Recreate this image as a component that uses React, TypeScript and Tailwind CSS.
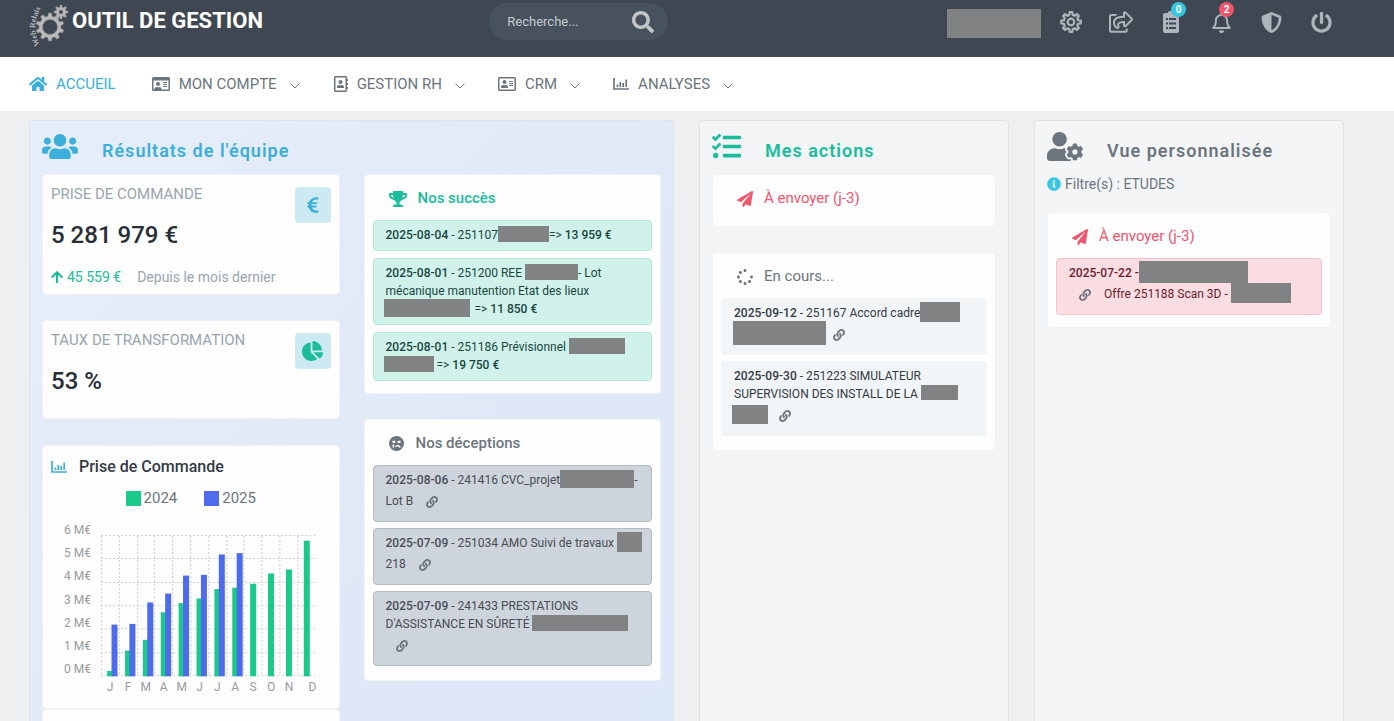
import type { ReactNode } from "react";
import {
  FaArrowUp,
  FaChartPie,
  FaEuroSign,
  FaHome,
  FaInfoCircle,
  FaLink,
  FaPaperPlane,
  FaPowerOff,
  FaRegAddressBook,
  FaRegAddressCard,
  FaRegBell,
  FaRegIdCard,
  FaRegShareSquare,
  FaSearch,
  FaShieldAlt,
  FaSpinner,
  FaTasks,
  FaTrophy,
  FaUserCog,
  FaUsers,
} from "react-icons/fa";

const MONTHS = ["J", "F", "M", "A", "M", "J", "J", "A", "S", "O", "N", "D"];
const ORDERS_2024 = [0.23, 1.1, 1.56, 2.74, 3.13, 3.33, 3.73, 3.79, 3.96, 4.4, 4.57, 5.8];
const ORDERS_2025 = [2.21, 2.24, 3.16, 3.54, 4.31, 4.34, 5.21, 5.27];

function gearPath(cx: number, cy: number, teeth: number, outer: number, inner: number) {
  const points: string[] = [];
  const step = (Math.PI * 2) / teeth;
  for (let i = 0; i < teeth; i++) {
    const a = i * step - Math.PI / 2;
    const corners = [
      [inner, -0.3],
      [outer, -0.17],
      [outer, 0.17],
      [inner, 0.3],
    ];
    corners.forEach(([r, t]) => {
      points.push(`${(cx + r * Math.cos(a + t * step)).toFixed(2)} ${(cy + r * Math.sin(a + t * step)).toFixed(2)}`);
    });
  }
  return `M${points.join("L")}Z`;
}

function ring(cx: number, cy: number, r: number) {
  return `M${cx - r} ${cy}a${r} ${r} 0 1 0 ${r * 2} 0a${r} ${r} 0 1 0 ${-r * 2} 0Z`;
}

function Logo() {
  return (
    <svg className="w-[44px] h-[50px] shrink-0" viewBox="0 0 44 50" aria-hidden="true">
      <path fillRule="evenodd" fill="#b9b9b9" stroke="#8b8b8b" strokeWidth="0.5" d={gearPath(22, 27, 10, 14, 11) + ring(22, 27, 7.5)} />
      <path fillRule="evenodd" fill="#b9b9b9" stroke="#8b8b8b" strokeWidth="0.5" d={gearPath(33, 12, 8, 7, 5) + ring(33, 12, 2)} />
      <path id="logo-arc" fill="none" d="M12 45 Q2 27 13 8" />
      <text fill="#b4b8bc" fontSize="8" fontWeight="700" fontFamily="Liberation Serif, serif">
        <textPath href="#logo-arc">Web Relais</textPath>
      </text>
    </svg>
  );
}

function GearIcon({ className }: { className?: string }) {
  return (
    <svg className={className} viewBox="0 0 24 24" fill="none" stroke="currentColor" strokeWidth="2.4" strokeLinejoin="round">
      <path d={gearPath(12, 12, 8, 10.8, 8)} />
      <circle cx="12" cy="12" r="3.6" />
    </svg>
  );
}

function ListIcon({ className }: { className?: string }) {
  return (
    <svg className={className} viewBox="0 0 18 22">
      <path
        fill="currentColor"
        fillRule="evenodd"
        d="M3 2h3a3 2.500 0 0 1 6 0h3a2 2 0 0 1 2 2v16a2 2 0 0 1-2 2H3a2 2 0 0 1-2-2V4a2 2 0 0 1 2-2ZM4 7v2h2V7ZM7 7v2h7V7ZM4 11.500v2h2v-2ZM7 11.500v2h7v-2ZM4 16v2h2v-2ZM7 16v2h7v-2Z"
      />
    </svg>
  );
}

function BarsIcon({ className }: { className?: string }) {
  return (
    <svg className={className} viewBox="0 0 16 14" fill="none" stroke="currentColor" strokeWidth="1.7">
      <path d="M1 1V12H16M4.500 7.500V10M7.300 5V10M10.200 6V10M13.200 2.500V10" />
    </svg>
  );
}

function SadIcon({ className }: { className?: string }) {
  return (
    <svg className={className} viewBox="0 0 15 15">
      <circle cx="7.500" cy="7.500" r="7.500" fill="currentColor" />
      <path fill="#fff" d="M3.500 4.800h2.800v2.300H3.500ZM8.700 4.800h2.800v2.300H8.700ZM3.600 8.500h1.600v3H3.600Z" />
      <path fill="none" stroke="#fff" strokeWidth="1.300" strokeLinecap="round" d="M6.800 10.300Q9.500 8.700 11 11.300" />
    </svg>
  );
}

function ChevronDown() {
  return (
    <svg className="w-[10px] h-[6px] ml-[13px] mt-1" viewBox="0 0 10 6" fill="none" stroke="currentColor" strokeWidth="1">
      <polyline points="0.5 0.5 5 5 9.5 0.5" />
    </svg>
  );
}

function HeaderButton({ label, children }: { label: string; children: ReactNode }) {
  return (
    <button type="button" aria-label={label} className="relative w-[50px] h-11 flex items-center justify-center text-[#adb4bb]">
      {children}
    </button>
  );
}

function Redacted({ className }: { className: string }) {
  return <span className={`inline-block align-middle bg-[#808284] -mt-[10px] -mb-[6px] ${className}`} />;
}

function ItemLink({ className = "" }: { className?: string }) {
  return (
    <a href="#" aria-label="Ouvrir le lien" className={`inline-flex h-[26px] items-center align-middle text-[#6c757d] ${className}`}>
      <FaLink className="w-3 h-3" />
    </a>
  );
}

function Panel({ className = "", children }: { className?: string; children: ReactNode }) {
  return <section className={`rounded border border-[#dfe2e6] p-3 ${className}`}>{children}</section>;
}

function PanelTitle({ icon, children }: { icon: ReactNode; children: ReactNode }) {
  return (
    <div className="flex h-[41px] gap-6">
      {icon}
      <h2 className="pt-[5px] text-[18px] leading-[26px] font-semibold tracking-[1px]">{children}</h2>
    </div>
  );
}

function Card({ className = "", children }: { className?: string; children: ReactNode }) {
  return <div className={`rounded border border-[#f0f2f5] bg-[#fefefe] px-2 ${className}`}>{children}</div>;
}

function CardTitle({ className = "", children }: { className?: string; children: ReactNode }) {
  return <h3 className={`flex h-[45px] items-center pl-4 pt-[2px] text-[15px] ${className}`}>{children}</h3>;
}

function Item({ className, children }: { className: string; children: ReactNode }) {
  return (
    <li className={`rounded border pt-[5px] pb-[6px] pl-3 text-[12px] leading-[18px] whitespace-nowrap ${className}`}>
      {children}
    </li>
  );
}

function OrdersChart() {
  const base = 160;
  const unit = 23.33;
  return (
    <svg className="w-full" viewBox="0 0 279 184" role="img" aria-label="Prise de commande par mois, 2024 et 2025">
      <g stroke="#c9ccd0" strokeDasharray="2 2">
        {[0, 1, 2, 3, 4, 5, 6].map((n) => (
          <line key={n} x1="50" x2="264" y1={Math.round(base - n * unit) - 0.5} y2={Math.round(base - n * unit) - 0.5} />
        ))}
        {MONTHS.map((_, i) => (
          <line key={i} x1={Math.round(50 + i * 17.8) + 0.5} x2={Math.round(50 + i * 17.8) + 0.5} y1="20" y2={base} />
        ))}
      </g>
      {ORDERS_2024.map((v, i) => (
        <rect key={i} x={56 + i * 17.85} y={base - v * unit} width="6" height={v * unit} fill="#1bc98a" />
      ))}
      {ORDERS_2025.map((v, i) => (
        <rect key={i} x={60.4 + i * 17.85} y={base - v * unit} width="6" height={v * unit} fill="#4f6bed" />
      ))}
      <g fill="#989ca1" fontSize="12">
        {[0, 1, 2, 3, 4, 5, 6].map((n) => (
          <text key={n} x="40" y={157 - n * 23.2} textAnchor="end">
            {n} M€
          </text>
        ))}
        {MONTHS.map((m, i) => (
          <text key={i} x={i === 11 ? 261 : 59 + i * 17.85} y="175" textAnchor="middle">
            {m}
          </text>
        ))}
      </g>
    </svg>
  );
}

const success = "border-[#b5e8db] bg-[#d1f2eb] text-[#17463d]";
const failure = "border-[#b4b9bf] bg-[#ced4dc] text-[#474d54]";
const pending = "border-[#f1f5f8] bg-[#f1f5f8] text-[#343a40]";
const danger = "border-[#f5c2ca] bg-[#fcdde2] text-[#6b1c2a]";

export default function App() {
  return (
    <div className="h-screen overflow-hidden flex flex-col bg-[#eeeff1] font-[Roboto,sans-serif] text-[#6c757d]">
      <header className="h-[57px] shrink-0 flex items-start bg-[#3f4852] pl-7 pr-12">
        <div className="w-[35%] flex items-start">
          <Logo />
          <h1 className="pt-[7px] text-[22px] leading-7 font-bold text-white">OUTIL DE GESTION</h1>
        </div>
        <form className="mt-[3px] w-[179px] h-[37px] rounded-full bg-[#47525e] flex items-center pl-[18px] pr-[14px]">
          <input
            type="text"
            aria-label="Recherche"
            placeholder="Recherche..."
            className="w-full min-w-0 text-[13px] text-[#c3c9cf] placeholder-[#c3c9cf] outline-none"
          />
          <button type="button" aria-label="Lancer la recherche" className="text-[#c2c6ca]">
            <FaSearch className="w-[22px] h-[22px]" />
          </button>
        </form>
        <div className="ml-auto flex">
          <div className="w-[94px] h-[29px] mt-[9px] mr-[5px] bg-[#808284]" />
          <HeaderButton label="Paramètres">
            <GearIcon className="w-[22px] h-[22px]" />
          </HeaderButton>
          <HeaderButton label="Partager">
            <FaRegShareSquare className="w-6 h-6" />
          </HeaderButton>
          <HeaderButton label="Tâches">
            <ListIcon className="w-[18px] h-[22px]" />
            <span className="absolute top-[2px] left-[25px] w-[15px] h-[15px] rounded-full bg-[#37c6e2] text-[10px] leading-[15px] font-bold text-white">0</span>
          </HeaderButton>
          <HeaderButton label="Notifications">
            <FaRegBell className="w-[21px] h-[21px]" />
            <span className="absolute top-[2px] left-[23px] w-[15px] h-[15px] rounded-full bg-[#f1556c] text-[10px] leading-[15px] font-bold text-white">2</span>
          </HeaderButton>
          <HeaderButton label="Sécurité">
            <FaShieldAlt className="w-[21px] h-[21px]" />
          </HeaderButton>
          <HeaderButton label="Déconnexion">
            <FaPowerOff className="w-[21px] h-[21px]" />
          </HeaderButton>
        </div>
      </header>

      <nav className="h-[54px] shrink-0 flex items-center gap-[33px] bg-white pl-[29px] text-[15px] leading-6">
        <a href="#" className="flex items-center mr-[3px] text-[#3bafda]">
          <FaHome className="w-[18px] h-[18px] mr-[9px]" />
          ACCUEIL
        </a>
        <a href="#" className="flex items-center">
          <FaRegIdCard className="w-[18px] h-[18px] mr-[9px]" />
          MON COMPTE
          <ChevronDown />
        </a>
        <a href="#" className="flex items-center">
          <FaRegAddressBook className="w-4 h-4 mr-2" />
          GESTION RH
          <ChevronDown />
        </a>
        <a href="#" className="flex items-center">
          <FaRegAddressCard className="w-[18px] h-[18px] mr-[9px]" />
          CRM
          <ChevronDown />
        </a>
        <a href="#" className="flex items-center">
          <BarsIcon className="w-4 h-[14px] mr-[9px]" />
          ANALYSES
          <ChevronDown />
        </a>
      </nav>

      <main className="flex-1 min-h-0 grid grid-cols-4 gap-[25px] pt-[9px] pl-[29px] pr-[50px]">
        <Panel className="col-span-2 border-[#d3dbea] bg-linear-to-br from-[#e7eefb] via-[#e1e8f6] to-[#dce8fb]">
          <div className="text-[#3bafda]">
            <PanelTitle icon={<FaUsers className="w-9 h-[29px] -mt-[1px]" />}>Résultats de l'équipe</PanelTitle>
          </div>
          <div className="grid grid-cols-2 gap-6 items-start">
            <div>
              <Card className="h-[121px] mb-[25px]">
                <div className="flex justify-between">
                  <h3 className="pt-[7px] text-[15px] leading-6 text-[#98a6ad]">PRISE DE COMMANDE</h3>
                  <span className="mt-[12px] w-9 h-9 rounded flex items-center justify-center bg-[#cdeaf3] text-[#3bafda]">
                    <FaEuroSign className="w-5 h-[18px]" />
                  </span>
                </div>
                <p className="text-[24px] leading-6 font-medium text-[#272e37]">5 281 979 €</p>
                <p className="flex items-center mt-[18px] text-[14px] leading-6 text-[#98a6ad]">
                  <FaArrowUp className="w-3 h-[14px] mr-1 text-[#1abc9c]" />
                  <span className="text-[#1abc9c] mr-4">45 559 €</span>
                  Depuis le mois dernier
                </p>
              </Card>
              <Card className="h-[99px] mb-[26px]">
                <div className="flex justify-between">
                  <h3 className="pt-[7px] text-[15px] leading-6 text-[#98a6ad]">TAUX DE TRANSFORMATION</h3>
                  <span className="mt-[12px] w-9 h-9 rounded flex items-center justify-center bg-[#cdeaf3] text-[#1abc9c]">
                    <FaChartPie className="w-[21px] h-5" />
                  </span>
                </div>
                <p className="text-[24px] leading-6 font-medium text-[#272e37]">53 %</p>
              </Card>
              <Card className="h-[264px]">
                <h3 className="flex items-center h-[41px] text-[16px] font-medium text-[#323a46]">
                  <BarsIcon className="w-4 h-[14px] mr-3 text-[#3bafda]" />
                  Prise de Commande
                </h3>
                <div className="flex justify-center gap-[27px] h-[29px] pb-[6px] text-[15px] leading-[23px]">
                  <span className="flex items-center gap-[3px]">
                    <i className="w-[15px] h-[15px] bg-[#1bc98a]" />
                    2024
                  </span>
                  <span className="flex items-center gap-[3px]">
                    <i className="w-[15px] h-[15px] bg-[#4f6bed]" />
                    2025
                  </span>
                </div>
                <OrdersChart />
              </Card>
              <Card className="h-40">{null}</Card>
            </div>

            <div>
              <Card className="pb-3 mb-[25px]">
                <CardTitle className="font-medium text-[#1abc9c]">
                  <FaTrophy className="w-[18px] h-4 mr-[11px]" />
                  Nos succès
                </CardTitle>
                <ul className="flex flex-col gap-[7px]">
                  <Item className={success}>
                    <b className="font-medium">2025-08-04</b> - 251107
                    <Redacted className="w-[51px] h-4" />
                    =&gt; <b className="font-medium">13 959 €</b>
                  </Item>
                  <Item className={success}>
                    <b className="font-medium">2025-08-01</b> - 251200 REE <Redacted className="w-[53px] h-4" />- Lot
                    <br />
                    mécanique manutention Etat des lieux
                    <br />
                    <Redacted className="w-[86px] h-[18px] -ml-[2px] mr-[2px]" /> =&gt; <b className="font-medium">11 850 €</b>
                  </Item>
                  <Item className={success}>
                    <b className="font-medium">2025-08-01</b> - 251186 Prévisionnel <Redacted className="w-14 h-4" />
                    <br />
                    <Redacted className="w-[50px] h-4 -ml-[2px]" /> =&gt; <b className="font-medium">19 750 €</b>
                  </Item>
                </ul>
              </Card>
              <Card className="pb-[14px]">
                <CardTitle className="font-medium">
                  <SadIcon className="w-[15px] h-[15px] mr-3" />
                  Nos déceptions
                </CardTitle>
                <ul className="flex flex-col gap-[6px]">
                  <Item className={failure}>
                    <b className="font-medium">2025-08-06</b> - 241416 CVC_projet
                    <Redacted className="w-[74px] h-[18px]" />-
                    <br />
                    Lot B <ItemLink className="ml-[10px]" />
                  </Item>
                  <Item className={failure}>
                    <b className="font-medium">2025-07-09</b> - 251034 AMO Suivi de travaux <Redacted className="w-[25px] h-5" />
                    <br />
                    218 <ItemLink className="ml-[10px]" />
                  </Item>
                  <Item className={failure}>
                    <b className="font-medium">2025-07-09</b> - 241433 PRESTATIONS
                    <br />
                    D'ASSISTANCE EN SÛRETÉ <Redacted className="w-24 h-4" />
                    <br />
                    <ItemLink className="ml-[10px]" />
                  </Item>
                </ul>
              </Card>
            </div>
          </div>
        </Panel>

        <Panel className="bg-[#f2f4f6]">
          <div className="text-[#1abc9c]">
            <PanelTitle icon={<FaTasks className="w-[29px] h-[29px] -mt-[1px]" />}>Mes actions</PanelTitle>
          </div>
          <Card className="h-[53px] mb-[25px]">
            <CardTitle className="text-[#f1556c]">
              <FaPaperPlane className="w-4 h-4 mr-[11px]" />À envoyer (j-3)
            </CardTitle>
          </Card>
          <Card className="pb-[14px]">
            <CardTitle>
              <FaSpinner className="w-4 h-4 mr-[11px]" />
              En cours...
            </CardTitle>
            <ul className="flex flex-col gap-[6px]">
              <Item className={pending}>
                <b className="font-medium">2025-09-12</b> - 251167 Accord cadre
                <Redacted className="w-10 h-5" />
                <br />
                <Redacted className="w-[93px] h-6 -ml-[1px]" />
                <ItemLink className="ml-[7px]" />
              </Item>
              <Item className={pending}>
                <b className="font-medium">2025-09-30</b> - 251223 SIMULATEUR
                <br />
                SUPERVISION DES INSTALL DE LA <Redacted className="w-[37px] h-[15px]" />
                <br />
                <Redacted className="w-9 h-[19px] -ml-[2px]" />
                <ItemLink className="ml-[11px]" />
              </Item>
            </ul>
          </Card>
        </Panel>

        <Panel className="bg-[#f3f5f7]">
          <PanelTitle icon={<FaUserCog className="w-9 h-[29px] -mt-[1px]" />}>Vue personnalisée</PanelTitle>
          <p className="flex items-center h-5 mb-[18px] text-[14px]">
            <FaInfoCircle className="w-[14px] h-[14px] mr-1 text-[#37c6e2]" />
            Filtre(s) : ETUDES
          </p>
          <Card className="pb-3">
            <CardTitle className="text-[#f1556c]">
              <FaPaperPlane className="w-4 h-4 mr-[11px]" />À envoyer (j-3)
            </CardTitle>
            <ul>
              <Item className={danger}>
                <b className="font-medium">2025-07-22 -</b>
                <Redacted className="w-[109px] h-[22px]" />
                <br />
                <ItemLink className="ml-[10px] mr-[13px]" />
                Offre 251188 Scan 3D - <Redacted className="w-[60px] h-5" />
              </Item>
            </ul>
          </Card>
        </Panel>
      </main>
    </div>
  );
}
